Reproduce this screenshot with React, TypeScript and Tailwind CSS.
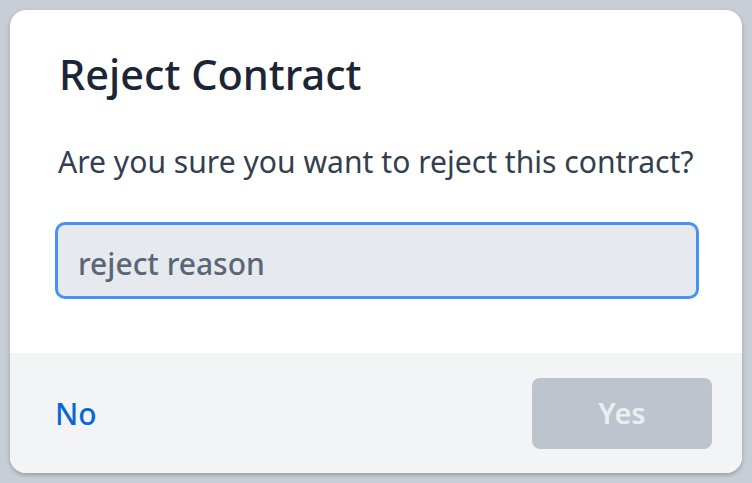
export default function App() {
  return (
    <div
      className="min-h-screen bg-[#c8ced6] p-[10px]"
      style={{ fontFamily: '"Noto Sans", "Open Sans", sans-serif' }}
    >
      <div className="h-[463px] bg-white rounded-[16px] shadow-[0_2px_4px_rgba(0,0,0,0.25)] overflow-hidden flex flex-col">
        {/* Body */}
        <div className="flex-1 px-[45px] pt-[39px]">
          <h2 className="text-[41.5px] leading-[50px] font-medium text-[#1b2535] pl-[4px]">
            Reject Contract
          </h2>
          <p className="mt-[43px] text-[30.1px] leading-[40px] text-[#333e4f] pl-[3px]">
            Are you sure you want to reject this contract?
          </p>
          <input
            className="mt-[40px] w-[644px] h-[77px] rounded-[10px] border-[3px] border-[#4790f5] bg-[#e6e9ee] px-[20px] pt-[6px] text-[30px] font-medium text-[#5a6677] placeholder:text-[#5a6677] outline-none"
            placeholder="reject reason"
          />
        </div>

        {/* Footer */}
        <div className="h-[120px] bg-[#f3f4f6] flex items-center justify-between pl-[45px] pr-[30px]">
          <button className="text-[30px] font-medium text-[#0b66d8]">No</button>
          <button className="w-[180px] h-[71px] rounded-[8px] bg-[#bdc4cd] text-[29px] font-semibold text-[#eceef1]">
            Yes
          </button>
        </div>
      </div>
    </div>
  );
}
